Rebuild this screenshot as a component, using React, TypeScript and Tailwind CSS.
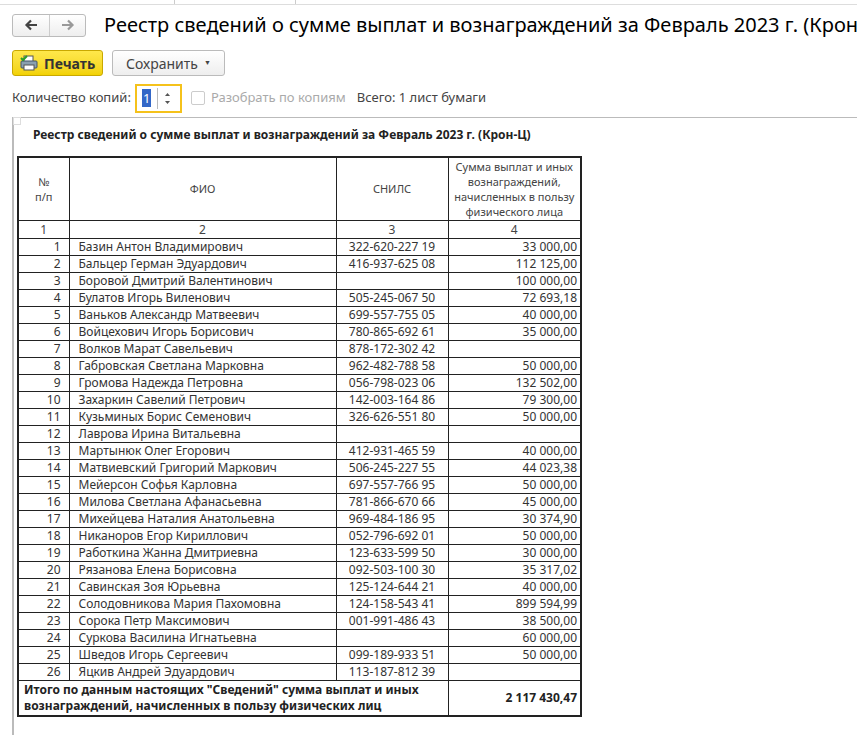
import React from "react"

const rows: [string, string, string][] = [
  ["Базин Антон Владимирович", "322-620-227 19", "33 000,00"],
  ["Бальцер Герман Эдуардович", "416-937-625 08", "112 125,00"],
  ["Боровой Дмитрий Валентинович", "", "100 000,00"],
  ["Булатов Игорь Виленович", "505-245-067 50", "72 693,18"],
  ["Ваньков Александр Матвеевич", "699-557-755 05", "40 000,00"],
  ["Войцехович Игорь Борисович", "780-865-692 61", "35 000,00"],
  ["Волков Марат Савельевич", "878-172-302 42", ""],
  ["Габровская Светлана Марковна", "962-482-788 58", "50 000,00"],
  ["Громова Надежда Петровна", "056-798-023 06", "132 502,00"],
  ["Захаркин Савелий Петрович", "142-003-164 86", "79 300,00"],
  ["Кузьминых Борис Семенович", "326-626-551 80", "50 000,00"],
  ["Лаврова Ирина Витальевна", "", ""],
  ["Мартынюк Олег Егорович", "412-931-465 59", "40 000,00"],
  ["Матвиевский Григорий Маркович", "506-245-227 55", "44 023,38"],
  ["Мейерсон Софья Карловна", "697-557-766 95", "50 000,00"],
  ["Милова Светлана Афанасьевна", "781-866-670 66", "45 000,00"],
  ["Михейцева Наталия Анатольевна", "969-484-186 95", "30 374,90"],
  ["Никаноров Егор Кириллович", "052-796-692 01", "50 000,00"],
  ["Работкина Жанна Дмитриевна", "123-633-599 50", "30 000,00"],
  ["Рязанова Елена Борисовна", "092-503-100 30", "35 317,02"],
  ["Савинская Зоя Юрьевна", "125-124-644 21", "40 000,00"],
  ["Солодовникова Мария Пахомовна", "124-158-543 41", "899 594,99"],
  ["Сорока Петр Максимович", "001-991-486 43", "38 500,00"],
  ["Суркова Василина Игнатьевна", "", "60 000,00"],
  ["Шведов Игорь Сергеевич", "099-189-933 51", "50 000,00"],
  ["Яцкив Андрей Эдуардович", "113-187-812 39", ""],
]

const cell = "border border-[#222] px-[3px] py-0"

export default function App() {
  return (
    <div className="w-[857px] h-[735px] bg-white overflow-hidden text-[#333] font-['Liberation_Sans'] relative">
      <div className="h-[5px] border-b border-[#ddd] flex">
        <div className="w-[175px] border-r border-[#ccc]" />
        <div className="w-[121px] border-r border-[#ccc]" />
      </div>
      <div className="flex items-center h-[36px] pl-[12px] mt-[2px]">
        <div className="flex h-[23px] border border-[#bbb] rounded-[3px] bg-gradient-to-b from-white to-[#eee]">
          <div className="w-[37px] flex items-center justify-center border-r border-[#ccc]">
            <svg width="14" height="12" viewBox="0 0 14 12"><path d="M13 6H3M7 1.5L2.5 6 7 10.5" stroke="#444" strokeWidth="2.2" fill="none" /></svg>
          </div>
          <div className="w-[35px] flex items-center justify-center">
            <svg width="14" height="12" viewBox="0 0 14 12"><path d="M1 6h10M7 1.5L11.5 6 7 10.5" stroke="#999" strokeWidth="2.2" fill="none" /></svg>
          </div>
        </div>
        <svg width="26" height="26" viewBox="0 0 24 24" className="ml-[10px]">
          <path d="M12 2.5l2.8 6.2 6.7.6-5.1 4.5 1.5 6.6L12 17l-5.9 3.4 1.5-6.6-5.1-4.5 6.7-.6z" fill="none" stroke="#bbb" strokeWidth="1" />
        </svg>
        <div className="ml-[8px] text-[20px] text-black whitespace-nowrap">Реестр сведений о сумме выплат и вознаграждений за Февраль 2023 г. (Крон-Ц)</div>
      </div>
      <div className="flex items-center gap-[9px] pl-[12px] mt-[7px]">
        <div className="h-[26px] w-[91px] rounded-[3px] border border-[#c9a800] bg-gradient-to-b from-[#ffe84a] to-[#f2d200] flex items-center gap-[6px] pl-[7px] text-[14px] font-bold text-[#333]">
          <svg width="18" height="16" viewBox="0 0 18 16">
            <rect x="4" y="1" width="9" height="6" fill="#fff" stroke="#555" />
            <rect x="1" y="6" width="16" height="7" rx="1" fill="#8aa0b0" stroke="#456" />
            <rect x="4" y="10" width="10" height="5" fill="#fff" stroke="#555" />
            <path d="M1 3l2 2 4-4" stroke="#2a9d2a" strokeWidth="2" fill="none" />
          </svg>
          Печать
        </div>
        <div className="h-[26px] rounded-[3px] border border-[#bbb] bg-gradient-to-b from-white to-[#eee] flex items-center px-[13px] text-[14px] text-[#444]">
          Сохранить <span className="ml-[6px] text-[7px]">▼</span>
        </div>
      </div>
      <div className="flex items-center pl-[12px] mt-[7px] text-[13px] h-[30px]">
        <span className="text-[#444]">Количество копий:</span>
        <div className="ml-[4px] w-[47px] h-[29px] border-2 border-[#f5c21b] flex items-center">
          <span className="ml-[5px] bg-[#3367c7] text-white leading-[18px] px-[1px]">1</span>
          <div className="ml-auto mr-[3px] h-[21px] border-l border-[#bbb] w-[20px] flex flex-col items-center justify-center gap-[5px]">
            <svg width="5" height="3" viewBox="0 0 5 3"><path d="M0 3L2.5 0 5 3z" fill="#555" /></svg>
            <svg width="5" height="3" viewBox="0 0 5 3"><path d="M0 0L2.5 3 5 0z" fill="#555" /></svg>
          </div>
        </div>
        <div className="ml-[9px] w-[14px] h-[14px] border border-[#ccc] rounded-[2px]" />
        <span className="ml-[6px] text-[#aaa]">Разобрать по копиям</span>
        <span className="ml-[11px] text-[#444]">Всего: 1 лист бумаги</span>
      </div>
      <div className="absolute left-[12px] top-[117px] right-0 bottom-0 border-l-2 border-t border-[#bbb]">
        <div className="w-[8px] h-[8px] border border-[#ddd] -ml-[1px] -mt-[1px]" />
        <div className="ml-[19px] mt-[1px] text-[12px] font-bold text-[#222]">Реестр сведений о сумме выплат и вознаграждений за Февраль 2023 г. (Крон-Ц)</div>
        <table className="ml-[3px] mt-[12px] border-collapse text-[12px] leading-[15px] border-2 border-[#222]">
          <colgroup>
            <col className="w-[51px]" /><col className="w-[267px]" /><col className="w-[112px]" /><col className="w-[133px]" />
          </colgroup>
          <tbody>
            <tr className="h-[63px] text-[11px] leading-[15px] text-center text-[#444]">
              <td className={cell}>№<br />п/п</td>
              <td className={cell}>ФИО</td>
              <td className={cell}>СНИЛС</td>
              <td className={cell}>Сумма выплат и иных вознаграждений, начисленных в пользу физического лица</td>
            </tr>
            <tr className="h-[18px] text-center text-[#444]">
              <td className={cell}>1</td><td className={cell}>2</td><td className={cell}>3</td><td className={cell}>4</td>
            </tr>
            {rows.map((r, i) => (
              <tr key={i} className="h-[17px]">
                <td className={`${cell} text-right pr-[8px]`}>{i + 1}</td>
                <td className={`${cell} pl-[9px]`}>{r[0]}</td>
                <td className={`${cell} text-center`}>{r[1]}</td>
                <td className={`${cell} text-right`}>{r[2]}</td>
              </tr>
            ))}
            <tr className="h-[36px] font-bold text-[#222]">
              <td colSpan={3} className={`${cell} pl-[5px] leading-[16px]`}>Итого по данным настоящих "Сведений" сумма выплат и иных вознаграждений, начисленных в пользу физических лиц</td>
              <td className={`${cell} text-right`}>2 117 430,47</td>
            </tr>
          </tbody>
        </table>
      </div>
    </div>
  )
}
